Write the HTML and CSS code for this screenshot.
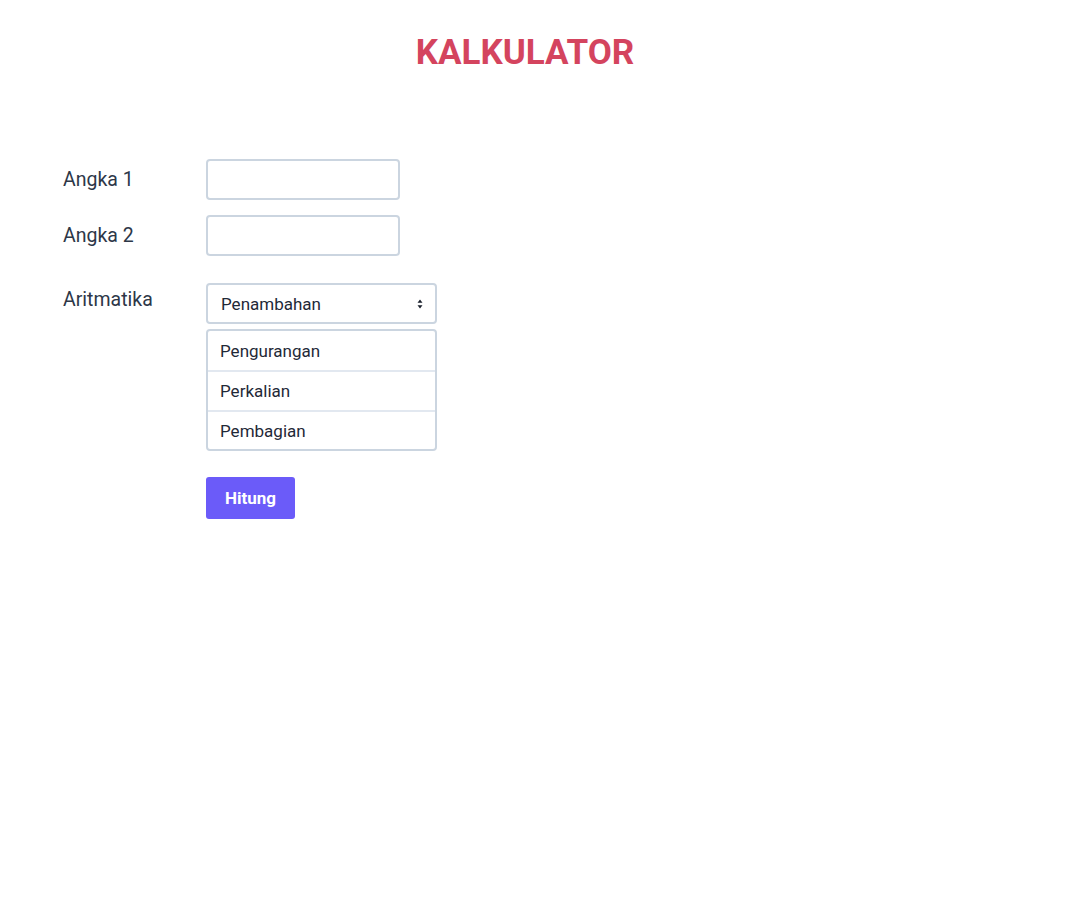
FILE: index.html
```html
<!DOCTYPE html>
<html lang="id">
<head>
<meta charset="utf-8">
<title>Kalkulator</title>
<link rel="stylesheet" href="styles.css">
</head>
<body>
<h1 class="title">KALKULATOR</h1>
<form class="form">
  <label class="label row1">Angka 1</label>
  <input class="field" type="text">
  <label class="label row1">Angka 2</label>
  <input class="field" type="text">
  <label class="label label-top">Aritmatika</label>
  <div class="select-group">
    <div class="select">
      <span>Penambahan</span>
      <svg class="arrows" width="6" height="10" viewBox="0 0 6 10"><path d="M3 0.5 L5.5 3.8 H0.5 Z M3 9.5 L5.5 6.2 H0.5 Z" fill="#1a202c"/></svg>
    </div>
    <ul class="options">
      <li>Pengurangan</li>
      <li>Perkalian</li>
      <li>Pembagian</li>
    </ul>
  </div>
  <span></span>
  <div><button class="btn" type="button">Hitung</button></div>
</form>
</body>
</html>
```
FILE: styles.css
```css
* { box-sizing: border-box; }
body {
  margin: 0;
  background: #fff;
  font-family: Roboto, "Noto Sans", sans-serif;
  color: #2d3748;
}
.title {
  margin: 0;
  padding-top: 33px;
  text-align: center;
  padding-right: 30px;
  font-size: 35px;
  line-height: 40px;
  font-weight: 700;
  color: #d4445e;
  letter-spacing: 0;
}
.form {
  display: grid;
  grid-template-columns: 143px auto;
  justify-content: start;
  align-items: center;
  row-gap: 15px;
  padding-left: 63px;
  margin-top: 86px;
}
.label {
  font-size: 19.5px;
  font-weight: 400;
  color: #2d3748;
}
.label-top {
  align-self: start;
  padding-top: 5px;
  margin-top: 12px;
}
.field {
  width: 194px;
  height: 41px;
  border: 2px solid #cbd5e0;
  border-radius: 4px;
  background: #fff;
  padding: 0 12px;
  font: inherit;
}
.select-group {
  width: 231px;
  margin-top: 12px;
}
.select {
  height: 41px;
  border: 2px solid #cbd5e0;
  border-radius: 4px;
  display: flex;
  align-items: center;
  justify-content: space-between;
  padding: 0 12px 0 13px;
  font-size: 17px;
  color: #1f2937;
}
.options {
  list-style: none;
  margin: 5px 0 0;
  padding: 0;
  border: 2px solid #cbd5e0;
  border-radius: 4px;
}
.options li {
  height: 40px;
  display: flex;
  align-items: center;
  padding-left: 12px;
  font-size: 17px;
  color: #1f2937;
  border-top: 2px solid #e2e8f0;
}
.options li:first-child { border-top: 0; height: 39px; }
.options li:last-child { height: 39px; }
.btn {
  margin-top: 11px;
  width: 89px;
  height: 42px;
  border: 0;
  border-radius: 3px;
  background: #6b5bf9;
  color: #fff;
  font: inherit;
  font-size: 17px;
  font-weight: 700;
}
```
